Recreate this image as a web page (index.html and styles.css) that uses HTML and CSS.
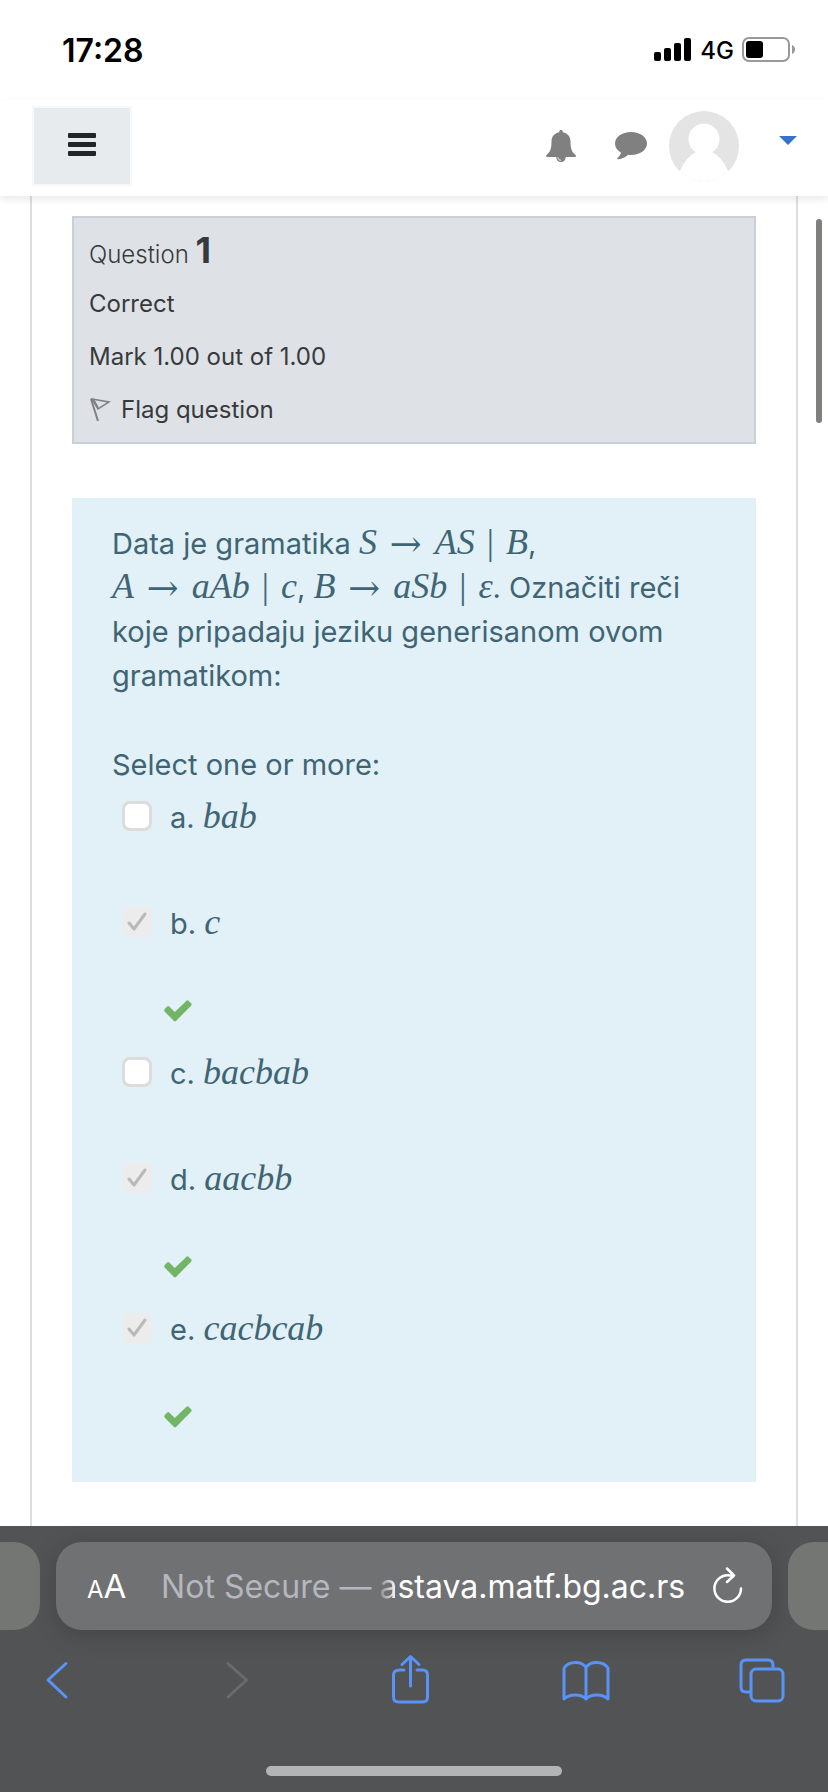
FILE: index.html
```html
<!DOCTYPE html>
<html lang="en">
<head>
<meta charset="utf-8">
<meta name="viewport" content="width=device-width, initial-scale=1">
<title>Quiz review</title>
<link rel="stylesheet" href="styles.css">
</head>
<body>
<div class="statusbar">
  <span class="time">17:28</span>
  <div class="indicators">
    <svg class="signal" width="38" height="24" viewBox="0 0 38 24" aria-hidden="true"><rect x="0" y="14" width="7" height="9" rx="2"/><rect x="10" y="10" width="7" height="13" rx="2"/><rect x="20" y="5" width="7" height="18" rx="2"/><rect x="30" y="0" width="7" height="23" rx="2"/></svg>
    <span class="network">4G</span>
    <svg class="battery" width="53" height="26" viewBox="0 0 53 26" aria-hidden="true"><rect x="1" y="1" width="46" height="23" rx="6" fill="none" stroke="#999" stroke-width="2"/><rect x="4" y="4" width="17" height="17" rx="3"/><path d="M50 8c4 1 4 8 0 9z" fill="#999"/></svg>
  </div>
</div>
<header class="navbar">
  <button class="menu-btn" aria-label="Side panel">
    <svg width="28" height="24" viewBox="0 0 28 24" fill="#212529"><rect x="0" y="0" width="28" height="5" rx="1"/><rect x="0" y="9" width="28" height="5" rx="1"/><rect x="0" y="18" width="28" height="5" rx="1"/></svg>
  </button>
  <div class="nav-tools">
    <button class="icon-btn" aria-label="Notifications">
      <svg width="30" height="32" viewBox="0 0 30 32"><path fill="#808080" d="M15 0c-1.300 0-2 .8-1.700 2.300C8 3.300 5.500 7 5.500 11.500 5.500 19 4 22 .5 25c-1 1.200-.3 2 .8 2h9c0 3 2 5 4.700 5s4.700-2 4.700-5h9c1.100 0 1.800-.8.8-2-3.500-3-5-6-5-13.500 0-4.500-2.500-8.200-7.800-9.200C17 .8 16.300 0 15 0z"/><path d="M12 27.500c0 1.700 1.200 2.700 3 2.700" fill="none" stroke="#fff"/></svg>
    </button>
    <button class="icon-btn" aria-label="Messages">
      <svg width="32" height="28" viewBox="0 0 32 28"><path fill="#808080" d="M16 0C7 0 0 5 0 11.500c0 3.700 2.300 7 6 9.200-.5 2-1.800 3.600-3.300 5-.8.8-.5 1.700.6 1.500 4-.6 7.200-2 9.800-4.500 1 .2 2 .3 2.900.3 9 0 16-5 16-11.500S25 0 16 0z"/></svg>
    </button>
    <button class="user-btn" aria-label="User menu">
      <svg class="avatar" width="70" height="70" viewBox="0 0 70 70"><defs><clipPath id="disc"><circle cx="35" cy="35" r="35"/></clipPath></defs><g clip-path="url(#disc)"><rect width="70" height="70" fill="#e4e4e4"/><circle cx="35" cy="28" r="15.500" fill="#fff"/><path fill="#fff" d="M27 41Q17 46 11 60L0 70H70L59 60Q53 46 43 41z"/></g></svg>
      <svg class="caret" width="18" height="9" viewBox="0 0 18 9"><path d="M0 0h18L9 9z" fill="#3572cb"/></svg>
    </button>
  </div>
</header>
<main class="viewport">
  <div class="scroll-thumb"></div>
  <div class="page-card">
    <section class="info">
      <h3 class="info-title">Question <b>1</b></h3>
      <div class="info-line">Correct</div>
      <div class="info-line">Mark 1.00 out of 1.00</div>
      <button class="flag"><svg width="22" height="26" viewBox="0 0 22 26" fill="none" stroke="#808080"><path d="M2 2l7 22" stroke-width="2"/><path d="M3 2l17 3L9 12z" stroke-width="1.500"/><path d="M4 2l5 9" stroke-width="2"/></svg>Flag question</button>
    </section>
    <section class="question">
      <p class="prompt">Data je gramatika <span class="math">S<span class="rel">→</span>AS<span class="bar">|</span>B</span>, <span class="math">A<span class="rel">→</span>aAb<span class="bar">|</span>c</span>, <span class="math">B<span class="rel">→</span>aSb<span class="bar">|</span>ε</span>. Označiti reči koje pripadaju jeziku generisanom ovom gramatikom:</p>
      <fieldset class="answers">
        <legend>Select one or more:</legend>
        <div class="answer"><input type="checkbox" id="a" disabled><label for="a">a. <span class="math">bab</span></label></div>
        <div class="answer right"><input type="checkbox" id="b" checked disabled><label for="b">b. <span class="math">c</span></label><svg class="tick" width="28" height="22" viewBox="0 0 28 22"><path d="M0.800 9L3.200 6.500Q4.200 5.700 5.200 6.500L10.800 12 22.500 0.700Q23.600 0 24.500 0.700L27.300 3.600Q28 4.500 27.300 5.500L12 21Q11 21.900 10 21L0.800 11.700Q-.2 10.500.8 9z"/></svg></div>
        <div class="answer"><input type="checkbox" id="c" disabled><label for="c">c. <span class="math">bacbab</span></label></div>
        <div class="answer right"><input type="checkbox" id="d" checked disabled><label for="d">d. <span class="math">aacbb</span></label><svg class="tick" width="28" height="22" viewBox="0 0 28 22"><path d="M0.800 9L3.200 6.500Q4.200 5.700 5.200 6.500L10.800 12 22.500 0.700Q23.600 0 24.500 0.700L27.300 3.600Q28 4.500 27.300 5.500L12 21Q11 21.900 10 21L0.800 11.700Q-.2 10.500.8 9z"/></svg></div>
        <div class="answer right"><input type="checkbox" id="e" checked disabled><label for="e">e. <span class="math">cacbcab</span></label><svg class="tick" width="28" height="22" viewBox="0 0 28 22"><path d="M0.800 9L3.200 6.500Q4.200 5.700 5.200 6.500L10.800 12 22.500 0.700Q23.600 0 24.500 0.700L27.300 3.600Q28 4.500 27.300 5.500L12 21Q11 21.900 10 21L0.800 11.700Q-.2 10.500.8 9z"/></svg></div>
      </fieldset>
    </section>
  </div>
</main>
<footer class="browser">
  <div class="tabs-row">
    <div class="tab-edge left"></div>
    <div class="address">
      <button class="text-size" aria-label="Page settings"><span class="small">A</span><span>A</span></button>
      <button class="url"><span class="insecure">Not Secure —</span><span><span class="fade">a</span>stava.matf.bg.ac.rs</span></button>
      <button class="reload" aria-label="Reload"><svg width="32" height="38" viewBox="0 0 32 38" fill="none" stroke="#fff" stroke-width="2.500" stroke-linecap="round" stroke-linejoin="round"><path d="M29 21.500a13.300 13.300 0 1 1-13.300-13.300c2 0 3.500.2 5 .8M15 1.500l7 7-7 6.500"/></svg></button>
    </div>
    <div class="tab-edge right"></div>
  </div>
  <nav class="toolbar">
    <button aria-label="Back"><svg width="48" height="50" viewBox="0 0 48 50"><path d="M33 9.500L15 26l18 17"/></svg></button>
    <button aria-label="Forward" disabled><svg width="48" height="50" viewBox="0 0 48 50"><path d="M19 9.500L37.500 26 19 43"/></svg></button>
    <button aria-label="Share"><svg width="48" height="50" viewBox="0 0 48 50"><path d="M18 16h-4.500q-6 0-6 5v22q0 5 5 5h24q5 0 5-5V21q0-5-5-5H31M24.500 32V3M16 10.500L24.500 2.500 33 10.500"/></svg></button>
    <button aria-label="Bookmarks"><svg width="48" height="50" viewBox="0 0 48 50"><path d="M24 13.500C20 7 7 6.500 2 14v31c5-5.500 18-5.500 22 0 4-5.500 17-5.500 22 0V14C41 6.500 28 7 24 13.500zv31"/></svg></button>
    <button aria-label="Tabs"><svg width="48" height="50" viewBox="0 0 48 50"><rect x="13" y="15" width="32" height="32" rx="5"/><path d="M12 38H8q-5 0-5-5V11q0-5 5-5h22q5 0 5 5v3"/></svg></button>
  </nav>
  <div class="home"></div>
</footer>
</body>
</html>
```
FILE: styles.css
```css
* { box-sizing: border-box; }
body {
  margin: 0;
  min-height: 100vh;
  display: flex;
  flex-direction: column;
  background: #fff;
  font-family: Inter, "Liberation Sans", sans-serif;
  overflow-x: hidden;
}
button {
  margin: 0;
  padding: 0;
  border: 0;
  background: none;
  color: inherit;
  font: inherit;
}
svg { display: block; flex: none; }

.statusbar {
  height: 100px;
  padding: 0 33px 0 62px;
  display: flex;
  align-items: center;
  justify-content: space-between;
  color: #000;
}
.time { font-size: 32px; font-weight: 600; }
.indicators { display: flex; align-items: center; gap: 8px; }
.network { font-size: 24px; font-weight: 500; }

.navbar {
  height: 96px;
  padding: 0 31px 4px 32px;
  display: flex;
  align-items: center;
  justify-content: space-between;
  background: #fff;
  box-shadow: 0 4px 8px rgba(0, 0, 0, 0.08);
  z-index: 1;
}
.menu-btn {
  width: 100px;
  height: 80px;
  padding-bottom: 2px;
  border: 2px solid #f6f8fa;
  background: #e7ebee;
  display: grid;
  place-items: center;
}
.nav-tools { display: flex; align-items: center; }
.icon-btn { margin-right: 39px; }
.icon-btn + .icon-btn { margin-right: 22px; }
.user-btn { display: flex; align-items: center; gap: 40px; }
.caret { margin-bottom: 12px; }

.viewport { flex: 1; display: flex; position: relative; padding: 0 30px; }
.scroll-thumb {
  position: absolute;
  top: 23px;
  right: 6px;
  width: 6px;
  height: 204px;
  border-radius: 3px;
  background: #80807f;
}
.page-card {
  flex: 1;
  padding: 20px 40px 40px;
  border: solid #dedede;
  border-width: 0 2px;
}
.info {
  margin-bottom: 54px;
  padding: 14px 15px;
  border: 2px solid #cad0d7;
  background: #dee2e6;
  color: #373a3c;
  font-size: 24px;
}
.info-title {
  margin: 0 0 9px;
  font-size: 24px;
  font-weight: 300;
  line-height: 44px;
}
.info-title b { font-size: 36px; font-weight: 700; line-height: 36px; }
.info-line, .flag { height: 36px; line-height: 36px; margin-bottom: 17px; }
.flag { display: flex; align-items: center; gap: 10px; margin: 0; }

.question {
  padding: 24px 40px 26px;
  background: #e2f0f7;
  color: #3f6575;
  font-size: 29px;
  line-height: 44px;
}
.prompt { margin: 0 0 45px; }
.math {
  font-family: "Liberation Serif", serif;
  font-size: 36px;
  font-style: italic;
  line-height: 36px;
  white-space: nowrap;
}
.rel {
  display: inline-block;
  margin: 0 12px;
  font-family: "DejaVu Math TeX Gyre", "DejaVu Sans", sans-serif;
  font-size: 34px;
  font-style: normal;
}
.bar { display: inline-block; margin: 0 12px; font-style: normal; }
.answers { margin: 0; padding: 0; border: 0; }
.answers legend { padding: 0; margin-bottom: 7px; }
.answer {
  padding: 0 0 62px 10px;
  display: grid;
  grid-template-columns: 30px 1fr;
  column-gap: 18px;
  align-items: center;
}
.answer.right { padding-bottom: 28px; }
.answer label { height: 44px; line-height: 48px; }
.answer input {
  appearance: none;
  width: 30px;
  height: 30px;
  margin: 0;
  border: 3px solid #dcdcdc;
  border-radius: 8px;
  background: #fff;
}
.answer input:checked {
  border-color: #ececec;
  background: #ececec url("data:image/svg+xml,%3Csvg xmlns='http://www.w3.org/2000/svg' viewBox='0 0 24 24'%3E%3Cpath d='M4 13l5 6L20 4' fill='none' stroke='%23b9b9bb' stroke-width='3' stroke-linecap='round' stroke-linejoin='round'/%3E%3C/svg%3E") center / 24px 24px no-repeat;
}
.tick {
  grid-column: 1 / -1;
  margin: 56px 0 0 42px;
  fill: #73b566;
}

.browser {
  padding: 16px 0;
  background: #515355;
  color: #fff;
}
.tabs-row { display: flex; gap: 16px; height: 88px; }
.tab-edge { flex: 0 0 40px; background: #747674; }
.tab-edge.left { border-radius: 0 26px 26px 0; }
.tab-edge.right { border-radius: 26px 0 0 26px; }
.address {
  flex: 1;
  min-width: 0;
  padding: 0 28px 0 31px;
  display: flex;
  align-items: center;
  justify-content: space-between;
  border-radius: 26px;
  background: #707173;
  box-shadow: 0 4px 24px rgba(0, 0, 0, 0.18);
}
.text-size { display: flex; align-items: baseline; font-size: 33px; }
.text-size .small { font-size: 24px; }
.url { display: flex; gap: 8px; padding-left: 8px; font-size: 32px; white-space: nowrap; }
.insecure { color: #b5b6be; }
.fade {
  background: linear-gradient(90deg, #85868a, #fff);
  background-clip: text;
  -webkit-background-clip: text;
  color: transparent;
}
.toolbar {
  padding: 24px 42px 0 33px;
  display: flex;
  justify-content: space-between;
}
.toolbar svg {
  fill: none;
  stroke: #5a93f8;
  stroke-width: 3;
  stroke-linecap: round;
  stroke-linejoin: round;
}
.toolbar button:disabled svg { stroke: #6a6b6d; }
.home {
  width: 296px;
  height: 10px;
  margin: 62px auto 0;
  border-radius: 5px;
  background: #b4b4b4;
}
```
